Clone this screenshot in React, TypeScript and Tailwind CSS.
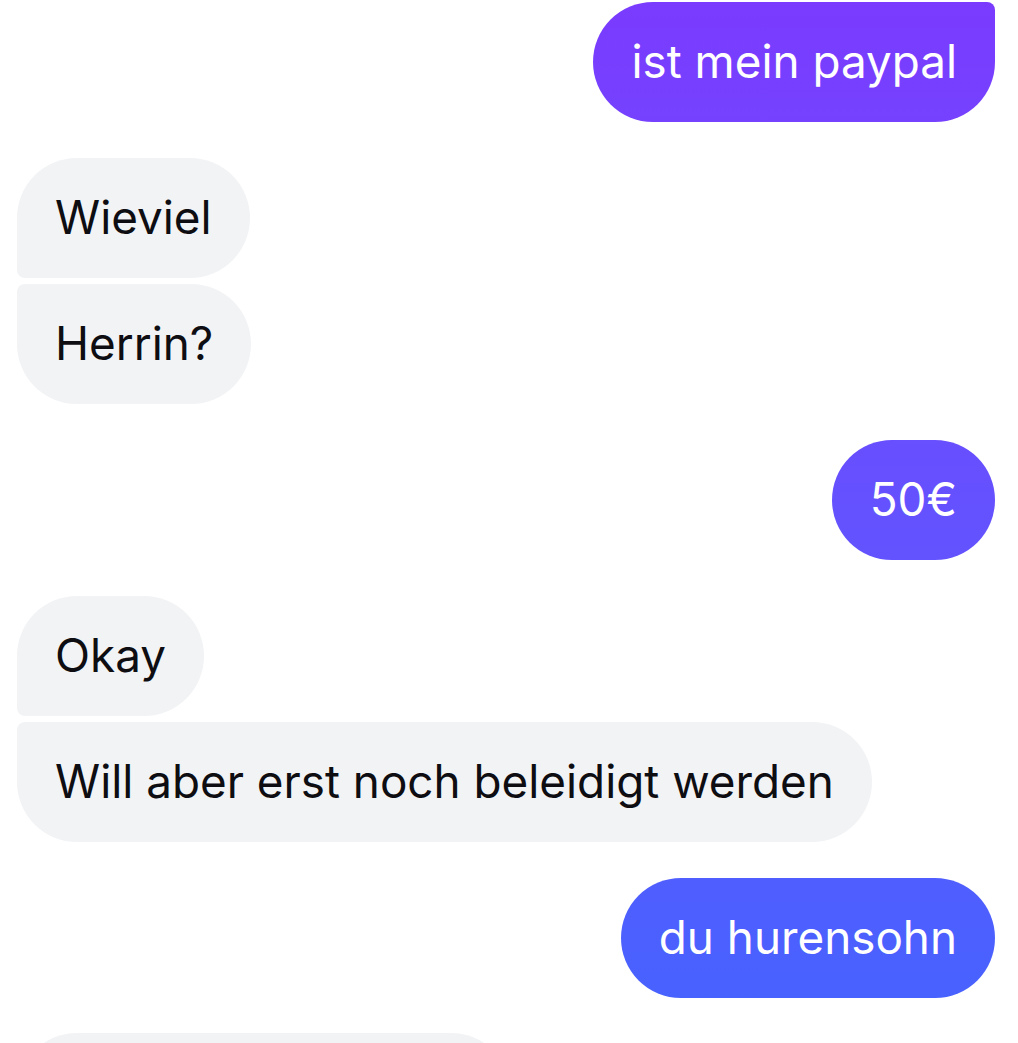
const MESSAGES = [
  { id: 1, from: "me", text: "ist mein paypal", corner: "rounded-tr-[8px]" },
  { id: 2, from: "them", text: "Wieviel", corner: "rounded-bl-[8px]" },
  { id: 3, from: "them", text: "Herrin?", corner: "rounded-tl-[8px]", tight: true },
  { id: 4, from: "me", text: "50€", corner: "" },
  { id: 5, from: "them", text: "Okay", corner: "rounded-bl-[8px]" },
  { id: 6, from: "them", text: "Will aber erst noch beleidigt werden", corner: "rounded-tl-[8px]", tight: true },
  { id: 7, from: "me", text: "du hurensohn", corner: "" },
];

function Bubble({ from, text, corner }: { from: string; text: string; corner: string }) {
  const mine = from === "me";
  return (
    <div className={mine ? "flex justify-end" : "flex justify-start"}>
      <div
        className={
          "flex h-[120px] items-center rounded-[60px] px-[38px] text-[45.8px] leading-none " +
          corner +
          (mine
            ? " bg-fixed bg-gradient-to-b from-[#7a3bff] to-[#4463ff] text-white"
            : " bg-[#f2f3f5] text-[#0d0d12]")
        }
      >
        {text}
      </div>
    </div>
  );
}

export default function App() {
  return (
    <div
      className="h-[1043px] overflow-hidden bg-white pl-[17px] pr-[23px] pt-[2px]"
      style={{ fontFamily: "Inter, 'Open Sans', sans-serif" }}
    >
      <div className="flex flex-col">
        {MESSAGES.map((m) => (
          <div key={m.id} className={m.tight ? "mt-[6px]" : m.id === 1 ? "" : "mt-[36px]"}>
            <Bubble from={m.from} text={m.text} corner={m.corner} />
          </div>
        ))}
        <div className="mt-[35px] flex">
          <div className="h-[120px] w-[494px] rounded-[60px] rounded-bl-[8px] bg-[#f2f3f5]" />
        </div>
      </div>
    </div>
  );
}
